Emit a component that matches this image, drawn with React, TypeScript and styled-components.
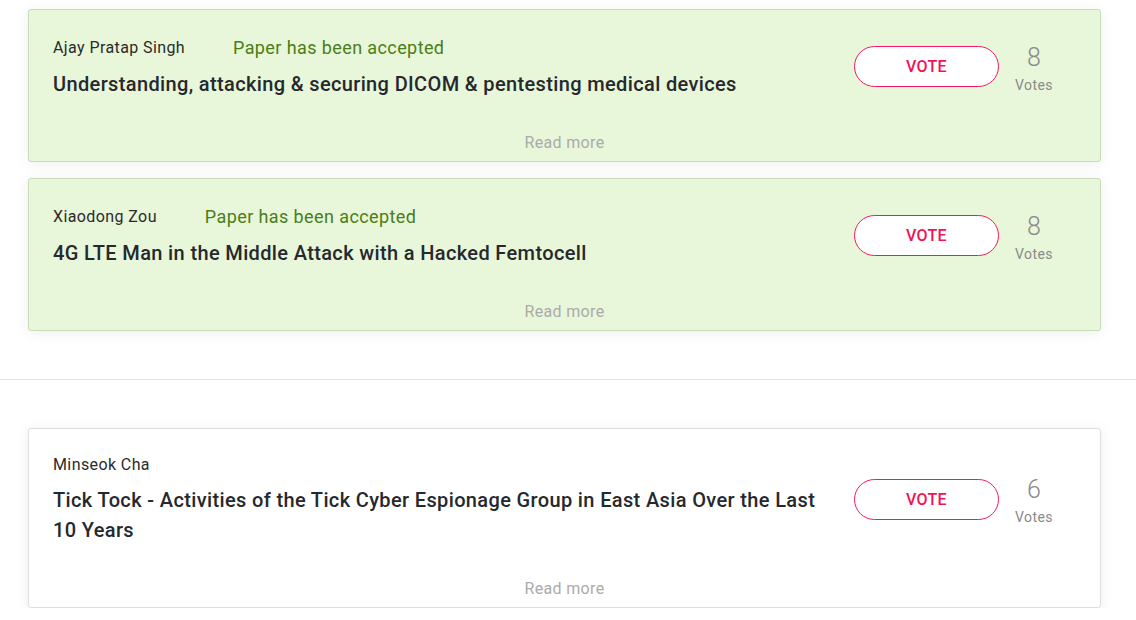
import React from "react";
import styled, { createGlobalStyle } from "styled-components";

const Global = createGlobalStyle`
  html, body { margin: 0; padding: 0; background: #fff; }
  body { font-family: Roboto, "Noto Sans", sans-serif; color: #212529; }
  * { box-sizing: border-box; }
`;

const Page = styled.div`
  width: 1136px;
  padding-top: 9px;
`;

const Section = styled.div`
  padding: 0 35px 0 28px;
  display: flex;
  flex-direction: column;
  gap: 16px;
`;

const Separator = styled.hr`
  margin: 48px 0 48px;
  border: 0;
  border-top: 1px solid #e2e2e2;
  height: 0;
`;

const Card = styled.div<{ $accepted?: boolean }>`
  width: 1073px;
  background: ${(p) => (p.$accepted ? "#e8f6da" : "#ffffff")};
  border: 1px solid ${(p) => (p.$accepted ? "#c9dcb9" : "#dedede")};
  border-radius: 3px;
  box-shadow: 0 2px 14px rgba(0, 0, 0, 0.07);
  padding: 24px 0 8px 24px;
  display: flex;
  flex-direction: column;
`;

const MainRow = styled.div`
  display: flex;
  align-items: center;
`;

const Info = styled.div`
  flex: 1;
  min-width: 0;
  padding-right: 24px;
`;

const AuthorRow = styled.div`
  display: flex;
  align-items: center;
`;

const Author = styled.span`
  font-size: 16px;
  line-height: 24px;
  color: #2b2b2b;
  letter-spacing: 0.4px;
`;

const Status = styled.span`
  font-size: 18px;
  line-height: 27px;
  color: #4a7e16;
  margin-left: 48px;
  letter-spacing: 0.4px;
`;

const Title = styled.div`
  margin-top: 8px;
  font-size: 20px;
  line-height: 30px;
  font-weight: 500;
  color: #25292d;
  letter-spacing: 0.36px;
`;

const VoteArea = styled.div`
  display: flex;
  align-items: center;
  flex-shrink: 0;
`;

const VoteButton = styled.button`
  width: 145px;
  height: 41px;
  border-radius: 21px;
  border: 1px solid #f5185e;
  background: #fff;
  color: #f5105a;
  font-family: Roboto, sans-serif;
  font-size: 16px;
  font-weight: 500;
  letter-spacing: 0.3px;
  cursor: pointer;
`;

const Count = styled.div`
  width: 70px;
  margin-right: 31px;
  display: flex;
  flex-direction: column;
  align-items: center;
  margin-top: 6px;
`;

const CountNum = styled.div`
  font-size: 25px;
  font-weight: 300;
  line-height: 26px;
  color: #8a8a8a;
`;

const CountLabel = styled.div`
  margin-top: 4px;
  font-size: 14px;
  line-height: 20px;
  color: #8a8a8a;
  letter-spacing: 0.4px;
`;

const ReadMore = styled.div`
  margin-top: 34px;
  margin-left: -24px;
  text-align: center;
  font-size: 16px;
  line-height: 20px;
  color: #ababab;
  letter-spacing: 0.35px;
`;

type Paper = { author: string; title: string; votes: number; accepted?: boolean };

const PaperCard = ({ p }: { p: Paper }) => (
  <Card $accepted={p.accepted}>
    <MainRow>
      <Info>
        <AuthorRow>
          <Author>{p.author}</Author>
          {p.accepted && <Status>Paper has been accepted</Status>}
        </AuthorRow>
        <Title>{p.title}</Title>
      </Info>
      <VoteArea>
        <VoteButton>VOTE</VoteButton>
        <Count>
          <CountNum>{p.votes}</CountNum>
          <CountLabel>Votes</CountLabel>
        </Count>
      </VoteArea>
    </MainRow>
    <ReadMore>Read more</ReadMore>
  </Card>
);

const accepted: Paper[] = [
  {
    author: "Ajay Pratap Singh",
    title: "Understanding, attacking & securing DICOM & pentesting medical devices",
    votes: 8,
    accepted: true,
  },
  {
    author: "Xiaodong Zou",
    title: "4G LTE Man in the Middle Attack with a Hacked Femtocell",
    votes: 8,
    accepted: true,
  },
];

const others: Paper[] = [
  {
    author: "Minseok Cha",
    title:
      "Tick Tock - Activities of the Tick Cyber Espionage Group in East Asia Over the Last 10 Years",
    votes: 6,
  },
];

export default function App() {
  return (
    <Page>
      <Global />
      <Section>
        {accepted.map((p) => (
          <PaperCard key={p.title} p={p} />
        ))}
      </Section>
      <Separator />
      <Section>
        {others.map((p) => (
          <PaperCard key={p.title} p={p} />
        ))}
      </Section>
    </Page>
  );
}
